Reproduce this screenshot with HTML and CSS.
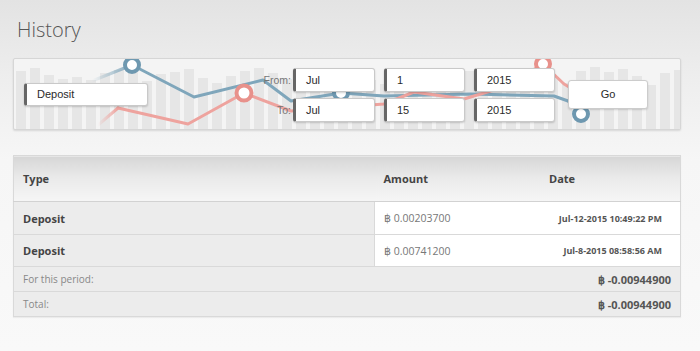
FILE: index.html
```html
<!DOCTYPE html>
<html>
<head>
<meta charset="utf-8">
<link rel="stylesheet" href="styles.css">
</head>
<body>
<h1 class="title">History</h1>

<div class="filter">
  <svg class="chart" width="668" height="72" viewBox="0 0 668 72">
    <defs>
      <linearGradient id="fadeB" x1="0" x2="1" y1="0" y2="0">
        <stop offset="0" stop-color="#7fa6bb" stop-opacity="0"/>
        <stop offset="1" stop-color="#7fa6bb" stop-opacity="1"/>
      </linearGradient>
      <linearGradient id="fadeR" x1="0" x2="1" y1="0" y2="0">
        <stop offset="0" stop-color="#eea39e" stop-opacity="0"/>
        <stop offset="1" stop-color="#eea39e" stop-opacity="1"/>
      </linearGradient>
    </defs>
    <g fill="#e6e6e6">
      <rect x="2" y="12" width="10" height="60"/><rect x="16" y="9" width="10" height="63"/>
      <rect x="30" y="16" width="10" height="56"/><rect x="44" y="20" width="10" height="52"/>
      <rect x="58" y="18" width="10" height="54"/><rect x="72" y="21" width="10" height="51"/>
      <rect x="86" y="14" width="10" height="58"/><rect x="100" y="11" width="10" height="61"/>
      <rect x="114" y="8" width="10" height="64"/><rect x="128" y="22" width="10" height="50"/>
      <rect x="142" y="15" width="10" height="57"/><rect x="156" y="13" width="10" height="59"/>
      <rect x="170" y="10" width="10" height="62"/><rect x="184" y="19" width="10" height="53"/>
      <rect x="198" y="24" width="10" height="48"/><rect x="212" y="17" width="10" height="55"/>
      <rect x="226" y="12" width="10" height="60"/><rect x="240" y="9" width="10" height="63"/>
      <rect x="254" y="14" width="10" height="58"/><rect x="268" y="20" width="10" height="52"/>
      <rect x="282" y="23" width="10" height="49"/><rect x="296" y="16" width="10" height="56"/>
      <rect x="310" y="11" width="10" height="61"/><rect x="324" y="18" width="10" height="54"/>
      <rect x="338" y="13" width="10" height="59"/><rect x="352" y="21" width="10" height="51"/>
      <rect x="366" y="25" width="10" height="47"/><rect x="380" y="15" width="10" height="57"/>
      <rect x="394" y="10" width="10" height="62"/><rect x="408" y="17" width="10" height="55"/>
      <rect x="422" y="22" width="10" height="50"/><rect x="436" y="19" width="10" height="53"/>
      <rect x="450" y="12" width="10" height="60"/><rect x="464" y="16" width="10" height="56"/>
      <rect x="478" y="20" width="10" height="52"/><rect x="492" y="14" width="10" height="58"/>
      <rect x="506" y="9" width="10" height="63"/><rect x="520" y="23" width="10" height="49"/>
      <rect x="534" y="18" width="10" height="54"/><rect x="548" y="24" width="10" height="48"/>
      <rect x="562" y="12" width="10" height="60"/><rect x="576" y="8" width="10" height="64"/>
      <rect x="590" y="13" width="10" height="59"/><rect x="604" y="10" width="10" height="62"/>
      <rect x="618" y="17" width="10" height="55"/><rect x="632" y="26" width="10" height="46"/>
      <rect x="646" y="14" width="10" height="58"/><rect x="660" y="11" width="10" height="61"/>
    </g>
    <g fill="none" stroke-width="3" stroke-linejoin="round" stroke-linecap="round">
      <polyline points="78,22 118,6" stroke="url(#fadeB)"/>
      <polyline points="118,6 180,38 249,21 277,42 327,34 370,37 457,35 540,37 554,42 567,55" stroke="#7fa6bb"/>
      <polyline points="84,66 104,49" stroke="url(#fadeR)"/>
      <polyline points="104,49 174,65 230,34 277,52 370,45 400,33 450,40 490,28 529,5 550,25 575,40" stroke="#eea39e"/>
    </g>
    <circle cx="118" cy="6" r="7" fill="#fff" stroke="#6e98b0" stroke-width="4"/>
    <circle cx="327" cy="34" r="7" fill="#fff" stroke="#6e98b0" stroke-width="4"/>
    <circle cx="567" cy="55" r="7" fill="#fff" stroke="#6e98b0" stroke-width="4"/>
    <circle cx="230" cy="34" r="7.5" fill="#fff" stroke="#e8918b" stroke-width="4"/>
    <circle cx="529" cy="5" r="7" fill="#fff" stroke="#e8918b" stroke-width="4"/>
  </svg>

  <div class="field type-field">Deposit</div>

  <div class="dates">
    <div class="date-row">
      <span class="lbl">From:</span>
      <div class="field month">Jul</div>
      <div class="field day">1</div>
      <div class="field year">2015</div>
    </div>
    <div class="date-row">
      <span class="lbl">To:</span>
      <div class="field month">Jul</div>
      <div class="field day">15</div>
      <div class="field year">2015</div>
    </div>
  </div>

  <div class="go">Go</div>
</div>

<table class="history">
  <thead>
    <tr><th class="c-type">Type</th><th class="c-amount">Amount</th><th class="c-date">Date</th></tr>
  </thead>
  <tbody>
    <tr class="row r1"><td class="c-type strong">Deposit</td><td class="c-amount amt">฿ 0.00203700</td><td class="c-date dt">Jul-12-2015 10:49:22 PM</td></tr>
    <tr class="row r2"><td class="c-type strong">Deposit</td><td class="c-amount amt">฿ 0.00741200</td><td class="c-date dt">Jul-8-2015 08:58:56 AM</td></tr>
    <tr class="sum"><td class="c-type muted">For this period:</td><td class="total" colspan="2">฿ -0.00944900</td></tr>
    <tr class="sum"><td class="c-type muted">Total:</td><td class="total" colspan="2">฿ -0.00944900</td></tr>
  </tbody>
</table>
</body>
</html>
```

FILE: styles.css
```css
html, body {
  margin: 0;
  padding: 0;
}
body {
  width: 700px;
  height: 351px;
  background: linear-gradient(to bottom, #e3e3e3 0px, #eeeeee 80px, #f6f6f6 160px, #f9f9f9 351px);
  font-family: "Open Sans", "Liberation Sans", sans-serif;
  padding: 0 19px 0 13px;
  box-sizing: border-box;
  overflow: hidden;
}
.title {
  margin: 0;
  padding: 17px 0 0 4px;
  height: 25px;
  line-height: 25px;
  font-size: 20px;
  font-weight: 300;
  color: #555;
}
.filter {
  position: relative;
  margin-top: 16px;
  height: 70px;
  width: 656px;
  border: 1px solid #d6d6d6;
  border-radius: 2px;
  background: #f4f4f4;
  box-shadow: 0 1px 2px rgba(0,0,0,0.12);
  display: flex;
  align-items: center;
  padding-left: 10px;
  box-sizing: content-box;
  overflow: hidden;
}
.chart {
  position: absolute;
  left: 0;
  top: 0;
}
.field {
  position: relative;
  box-sizing: border-box;
  height: 24px;
  background: #fff;
  border: 1px solid #c9c9c9;
  border-left: 3px solid #666;
  border-radius: 3px;
  box-shadow: 0 1px 2px rgba(0,0,0,0.18);
  font-family: "Liberation Sans", Arial, sans-serif;
  font-size: 11px;
  color: #2a2a2a;
  line-height: 22px;
  padding-left: 10px;
}
.type-field {
  width: 124px;
  height: 23px;
  line-height: 21px;
}
.dates {
  position: relative;
  margin-left: 103px;
  display: flex;
  flex-direction: column;
  gap: 6px;
  padding-top: 1px;
}
.date-row {
  display: flex;
  align-items: center;
}
.lbl {
  width: 40px;
  margin-right: 2px;
  text-align: right;
  font-family: "Liberation Sans", Arial, sans-serif;
  font-size: 10.5px;
  color: #777;
}
.month { width: 82px; margin-right: 9px; }
.day { width: 81px; margin-right: 9px; }
.year { width: 81px; }
.go {
  position: relative;
  margin-left: 13px;
  width: 80px;
  height: 29px;
  box-sizing: border-box;
  background: #fff;
  border: 1px solid #cccccc;
  border-radius: 3px;
  box-shadow: 0 1px 2px rgba(0,0,0,0.15);
  font-family: "Liberation Sans", Arial, sans-serif;
  font-size: 11px;
  color: #2a2a2a;
  text-align: center;
  line-height: 27px;
}
.history {
  margin-top: 25px;
  width: 668px;
  border-collapse: collapse;
  border: 1px solid #d9d9d9;
  box-shadow: 0 1px 1px rgba(0,0,0,0.05);
}
.history th {
  height: 45px;
  padding: 0;
  text-align: left;
  font-size: 11px;
  font-weight: 700;
  color: #444;
  background: linear-gradient(to bottom, #d6d6d6 0%, #e9e9e9 45%, #f6f6f6 100%);
  border-bottom: 1px solid #d2d2d2;
}
.history td {
  padding: 0;
  border-bottom: 1px solid #d9d9d9;
}
.c-type { width: 351px; padding-left: 9px !important; }
.c-amount { width: 155px; padding-left: 9px !important; }
.c-date { padding-left: 10px !important; }
.row td { background: #fff; }
.row td.c-type { background: #ececec; }
.row td.c-amount { border-left: 1px solid #d9d9d9; }
.r1 td { height: 32px; }
.r2 td { height: 31px; }
.strong {
  font-size: 11px;
  font-weight: 700;
  color: #444;
}
.amt {
  font-size: 10.5px;
  color: #777;
}
.dt {
  text-align: right;
  padding-right: 18px !important;
  font-size: 9px;
  font-weight: 700;
  color: #555;
}
.sum td {
  height: 24px;
  background: #ececec;
}
.muted {
  font-size: 10px;
  color: #888;
}
.total {
  text-align: right;
  padding-right: 9px !important;
  font-size: 11px;
  font-weight: 700;
  color: #555;
}
```
